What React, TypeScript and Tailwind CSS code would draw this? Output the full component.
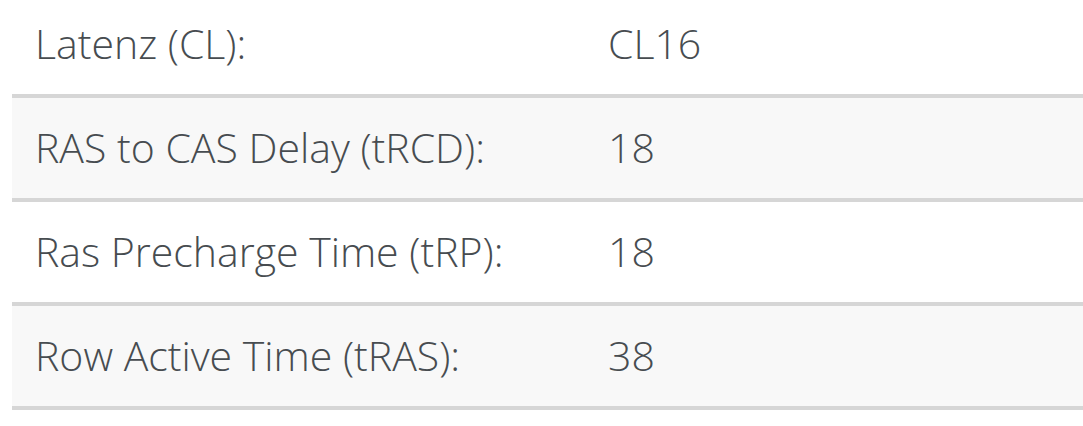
const rows: [string, string][] = [
  ["Latenz (CL):", "CL16"],
  ["RAS to CAS Delay (tRCD):", "18"],
  ["Ras Precharge Time (tRP):", "18"],
  ["Row Active Time (tRAS):", "38"],
];

export default function App() {
  return (
    <div className="w-[1083px] h-[426px] overflow-hidden bg-white pl-[12px]">
      <div className="-mt-[6px]" style={{ fontFamily: '"Open Sans", sans-serif' }}>
        {rows.map(([label, value], i) => (
          <div
            key={label}
            className={`grid grid-cols-[573px_1fr] h-[104px] items-center border-b-4 border-[#d6d6d6] text-[41px] font-light text-[#474c50] ${
              i % 2 === 1 ? "bg-[#f8f8f8]" : "bg-white"
            }`}
          >
            <div className="pl-[23px]">{label}</div>
            <div className="pl-[23px]">{value}</div>
          </div>
        ))}
      </div>
    </div>
  );
}
